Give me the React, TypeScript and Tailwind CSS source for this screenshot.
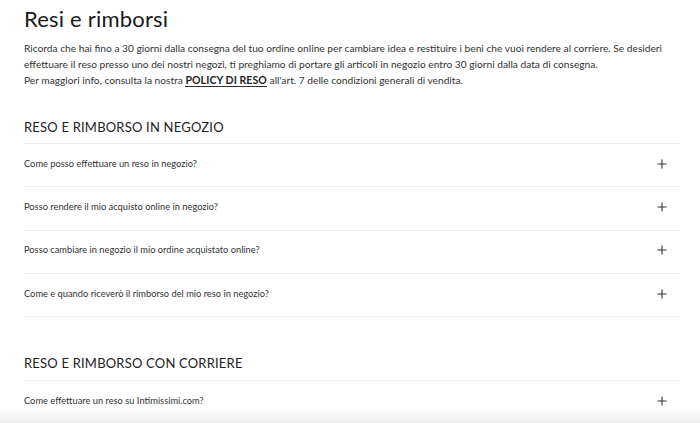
import React from "react";

const font = { fontFamily: "Lato, 'Open Sans', sans-serif" };

function Plus() {
  return (
    <svg width="10" height="10" viewBox="0 0 10 10" className="shrink-0">
      <path d="M5 0.5V9.5M0.5 5H9.5" stroke="#333" strokeWidth="1.1" />
    </svg>
  );
}

function Row({ text }: { text: string }) {
  return (
    <div className="flex h-[43.3px] items-center justify-between border-b border-[#ececec] pb-[3px] pr-[13px]">
      <span className="text-[9.3px] text-[#333]">{text}</span>
      <Plus />
    </div>
  );
}

export default function App() {
  return (
    <div className="relative h-[423px] w-[700px] overflow-hidden bg-white text-[#222]" style={font}>
      <div className="ml-[24px] w-[656px]">
        <h1 className="pt-[3px] text-[22px] leading-[32px] font-normal tracking-[0.2px] text-[#1a1a1a]">Resi e rimborsi</h1>
        <div className="mt-[5px] text-[10.2px] leading-[16px] text-[#333]">
          <div className="whitespace-nowrap">Ricorda che hai fino a 30 giorni dalla consegna del tuo ordine online per cambiare idea e restituire i beni che vuoi rendere al corriere. Se desideri</div>
          <div className="whitespace-nowrap">effettuare il reso presso uno dei nostri negozi, ti preghiamo di portare gli articoli in negozio entro 30 giorni dalla data di consegna.</div>
          <div className="whitespace-nowrap">
            Per maggiori info, consulta la nostra{" "}
            <span className="border-b border-[#333] font-bold text-[10.5px] tracking-[0.1px] text-[#222]">POLICY DI RESO</span>{" "}
            all'art. 7 delle condizioni generali di vendita.
          </div>
        </div>
        <h2 className="mt-[29px] text-[13px] leading-[20px] tracking-[0.2px] text-[#222]">RESO E RIMBORSO IN NEGOZIO</h2>
        <div className="mt-[6px] border-b border-[#ececec]" />
        <Row text="Come posso effettuare un reso in negozio?" />
        <Row text="Posso rendere il mio acquisto online in negozio?" />
        <Row text="Posso cambiare in negozio il mio ordine acquistato online?" />
        <Row text="Come e quando riceverò il rimborso del mio reso in negozio?" />
        <h2 className="mt-[36px] text-[13px] leading-[20px] tracking-[0.2px] text-[#222]">RESO E RIMBORSO CON CORRIERE</h2>
        <div className="mt-[7px] border-b border-[#ececec]" />
        <Row text="Come effettuare un reso su Intimissimi.com?" />
      </div>
      <div className="pointer-events-none absolute bottom-0 left-0 h-[16px] w-full bg-gradient-to-b from-white/0 to-[#efefef]" />
    </div>
  );
}
